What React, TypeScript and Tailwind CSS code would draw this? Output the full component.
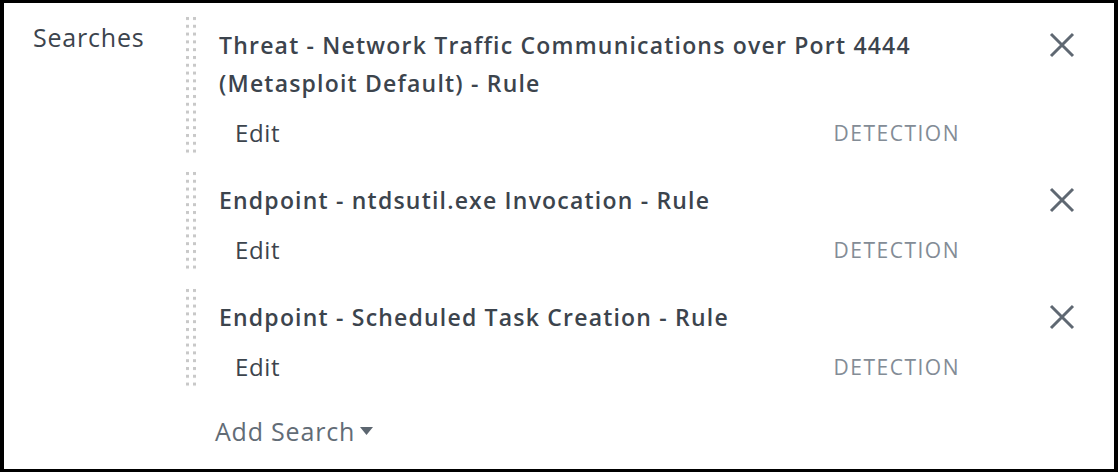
import React from "react";

const items = [
  { title: "Threat - Network Traffic Communications over Port 4444 (Metasploit Default) - Rule" },
  { title: "Endpoint - ntdsutil.exe Invocation - Rule" },
  { title: "Endpoint - Scheduled Task Creation - Rule" },
];

const Grip = ({ id }: { id: string }) => (
  <div className="relative w-[10px] shrink-0">
    <svg className="absolute inset-0 h-full w-full" aria-hidden>
      <defs>
        <pattern id={id} width="10" height="7.8" patternUnits="userSpaceOnUse">
          <rect x="0" y="1" width="3" height="3" fill="#c8c8c8" />
          <rect x="7" y="1" width="3" height="3" fill="#c8c8c8" />
        </pattern>
      </defs>
      <rect width="100%" height="100%" fill={`url(#${id})`} />
    </svg>
  </div>
);

const CloseIcon = () => (
  <svg width="26" height="26" viewBox="0 0 26 26" className="shrink-0">
    <path d="M2 2L24 24M24 2L2 24" stroke="#5f6872" strokeWidth="3" />
  </svg>
);

export default function App() {
  return (
    <div
      className="flex h-[472px] w-[1118px] border-x-4 border-y-[3px] border-black bg-white text-[#3c444d]"
      style={{ fontFamily: '"Open Sans", "Noto Sans", sans-serif' }}
    >
      <div className="w-[182px] shrink-0 pl-[29px] pt-[16px] text-[25px] leading-[36px] tracking-[0.8px]">
        Searches
      </div>
      <div className="flex flex-1 flex-col pt-[13px] pr-[39px]">
        <div className="flex flex-col gap-[16px]">
          {items.map((item, idx) => (
            <div key={idx} className="flex items-stretch">
              <Grip id={`grip-${idx}`} />
              <div className="flex flex-1 flex-col pl-[23px] pt-[10px] pb-[7px]">
                <div className="flex items-start justify-between">
                  <p className="max-w-[770px] text-[23px] font-semibold leading-[38px] tracking-[1.2px]">
                    {item.title}
                  </p>
                  <div className="mt-[6px]">
                    <CloseIcon />
                  </div>
                </div>
                <div className="mt-[16px] flex items-center pr-[115px] leading-[30px]">
                  <span className="flex-1 pl-[16px] text-[24px] tracking-[0.6px]">Edit</span>
                  <span className="text-[21px] tracking-[1.5px] text-[#838c96]">DETECTION</span>
                </div>
              </div>
            </div>
          ))}
        </div>
        <div className="mt-[27px] flex items-center pl-[29px] text-[25px] leading-[30px] tracking-[0.8px] text-[#626c76]">
          Add Search
          <svg width="15" height="10" viewBox="0 0 15 10" className="ml-[4px]">
            <path d="M1 1H14L7.5 9Z" fill="#5c6670" />
          </svg>
        </div>
      </div>
    </div>
  );
}
